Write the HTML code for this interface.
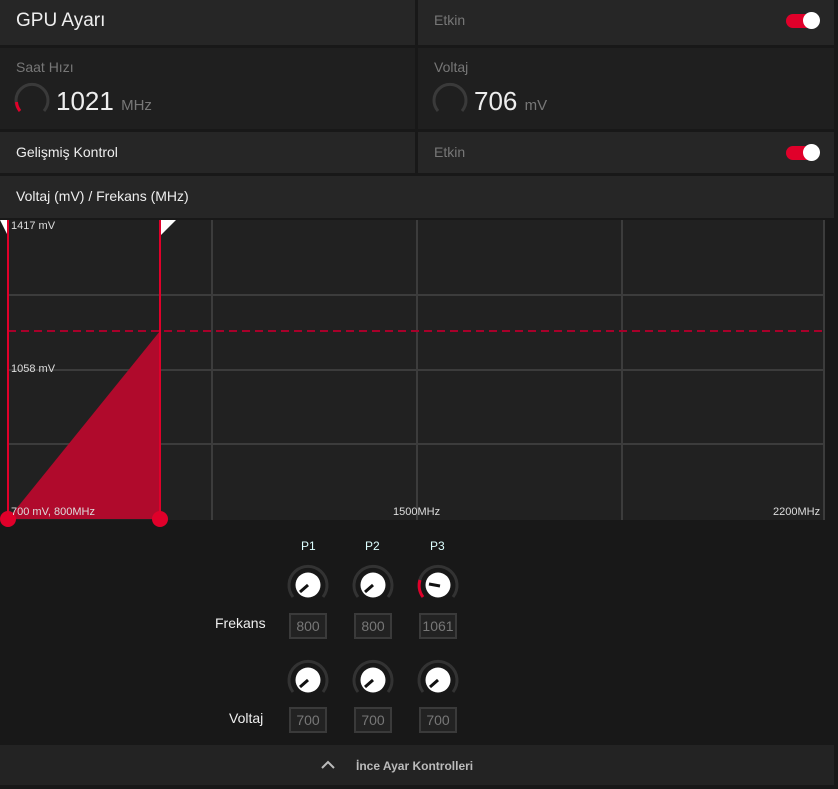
<!DOCTYPE html>
<html><head><meta charset="utf-8"><style>
*{margin:0;padding:0;box-sizing:border-box}
body{width:838px;height:789px;background:#181818;font-family:"Liberation Sans",sans-serif;position:relative;overflow:hidden;color:#eee}
.p{position:absolute;background:#262626}
.t{position:absolute;font-size:14px;color:#eee}
.g{color:#777}
.sw{position:absolute;width:32px;height:14px;background:#e0002a;border-radius:7px}
.sw:after{content:"";position:absolute;right:-2px;top:-2px;width:17px;height:17px;border-radius:50%;background:#fff}
.box{position:absolute;width:38px;height:26px;border:2px solid #3a3a3a;background:#222;color:#777;font-size:14px;text-align:center;line-height:22px}
.lbl{position:absolute;font-size:12px;color:#ddd}
</style></head><body>
<div class="p" style="left:0;top:0;width:415px;height:45px"></div>
<div class="p" style="left:418px;top:0;width:416px;height:45px"></div>
<div class="p" style="left:0;top:48px;width:415px;height:81px;background:#1f1f1f"></div>
<div class="p" style="left:418px;top:48px;width:416px;height:81px;background:#1f1f1f"></div>
<div class="p" style="left:0;top:132px;width:415px;height:41px"></div>
<div class="p" style="left:418px;top:132px;width:416px;height:41px"></div>
<div class="p" style="left:0;top:176px;width:834px;height:42px"></div>
<div class="t" style="left:16px;top:10px;font-size:19px">GPU Ayarı</div>
<div class="t g" style="left:434px;top:12px">Etkin</div>
<div class="sw" style="left:786px;top:14px"></div>
<div class="t g" style="left:16px;top:59px">Saat Hızı</div>
<div class="t g" style="left:434px;top:59px">Voltaj</div>
<svg style="position:absolute;left:13px;top:82px" width="38" height="34"><path d="M7 29 A16 16 0 1 1 31 29" fill="none" stroke="#3a3a3a" stroke-width="3"/><path d="M7 29 A16 16 0 0 1 3.5 20" fill="none" stroke="#e0002a" stroke-width="3"/></svg>
<svg style="position:absolute;left:431px;top:82px" width="38" height="34"><path d="M7 29 A16 16 0 1 1 31 29" fill="none" stroke="#3a3a3a" stroke-width="3"/></svg>
<div class="t" style="left:56px;top:86px;font-size:26px">1021 <span class="g" style="font-size:15px">MHz</span></div>
<div class="t" style="left:474px;top:86px;font-size:26px">706 <span class="g" style="font-size:15px">mV</span></div>
<div class="t" style="left:16px;top:144px">Gelişmiş Kontrol</div>
<div class="t g" style="left:434px;top:144px">Etkin</div>
<div class="sw" style="left:786px;top:146px"></div>
<div class="t" style="left:16px;top:188px">Voltaj (mV) / Frekans (MHz)</div>
<svg style="position:absolute;left:0;top:220px" width="838" height="310">
<rect x="0" y="0" width="825" height="300" fill="#212121"/>
<rect x="0" y="0" width="7" height="300" fill="#1a1a1a"/>
<g stroke="#3c3c3c" stroke-width="2"><line x1="212" y1="0" x2="212" y2="300"/><line x1="417" y1="0" x2="417" y2="300"/><line x1="622" y1="0" x2="622" y2="300"/><line x1="824" y1="0" x2="824" y2="300"/>
<line x1="8" y1="75" x2="825" y2="75"/><line x1="8" y1="150" x2="825" y2="150"/><line x1="8" y1="224" x2="825" y2="224"/></g>
<polygon points="8,299 160,111 160,299" fill="#b00a2c"/>
<line x1="8" y1="111" x2="825" y2="111" stroke="#a8002a" stroke-width="2" stroke-dasharray="8,5"/>
<line x1="8" y1="0" x2="8" y2="300" stroke="#e0002a" stroke-width="2"/>
<line x1="160" y1="0" x2="160" y2="300" stroke="#e0002a" stroke-width="2"/>
<polygon points="0,0 7,0 7,14" fill="#fff"/><polygon points="161,0 176,0 161,15" fill="#fff"/>
<circle cx="8" cy="299" r="8" fill="#e0002a"/><circle cx="160" cy="299" r="8" fill="#e0002a"/>
</svg>
<div class="lbl" style="left:11px;top:220px;font-size:11px">1417 mV</div>
<div class="lbl" style="left:11px;top:363px;font-size:11px">1058 mV</div>
<div class="lbl" style="left:11px;top:506px;font-size:11px">700 mV, 800MHz</div>
<div class="lbl" style="left:393px;top:506px;font-size:11px">1500MHz</div>
<div class="lbl" style="left:773px;top:506px;font-size:11px">2200MHz</div>
<div class="lbl" style="left:301px;top:539px;color:#dff">P1</div>
<div class="lbl" style="left:365px;top:539px;color:#dff">P2</div>
<div class="lbl" style="left:430px;top:539px;color:#dff">P3</div>
<svg style="position:absolute;left:280px;top:560px" width="190" height="150">
<defs><g id="k"><path d="M-15 12 A19 19 0 1 1 15 12" fill="none" stroke="#333" stroke-width="3"/><circle r="12.5" fill="#fff"/></g></defs>
<g transform="translate(28,25)"><use href="#k"/><line x1="0" y1="0" x2="-8" y2="7" stroke="#111" stroke-width="3"/></g>
<g transform="translate(93,25)"><use href="#k"/><line x1="0" y1="0" x2="-8" y2="7" stroke="#111" stroke-width="3"/></g>
<g transform="translate(158,25)"><use href="#k"/><path d="M-15 12 A19 19 0 0 1 -18 -5" fill="none" stroke="#e0002a" stroke-width="3"/><line x1="2" y1="1" x2="-9" y2="-1" stroke="#111" stroke-width="3"/></g>
<g transform="translate(28,120)"><use href="#k"/><line x1="0" y1="0" x2="-8" y2="7" stroke="#111" stroke-width="3"/></g>
<g transform="translate(93,120)"><use href="#k"/><line x1="0" y1="0" x2="-8" y2="7" stroke="#111" stroke-width="3"/></g>
<g transform="translate(158,120)"><use href="#k"/><line x1="0" y1="0" x2="-8" y2="7" stroke="#111" stroke-width="3"/></g>
</svg>
<div class="t" style="left:215px;top:615px">Frekans</div>
<div class="t" style="left:229px;top:710px">Voltaj</div>
<div class="box" style="left:289px;top:613px">800</div>
<div class="box" style="left:354px;top:613px">800</div>
<div class="box" style="left:419px;top:613px">1061</div>
<div class="box" style="left:289px;top:707px">700</div>
<div class="box" style="left:354px;top:707px">700</div>
<div class="box" style="left:419px;top:707px">700</div>
<div class="p" style="left:0;top:745px;width:834px;height:40px;background:#232323"></div>
<svg style="position:absolute;left:320px;top:760px" width="16" height="10"><path d="M2 8 L8 2 L14 8" fill="none" stroke="#bbb" stroke-width="2"/></svg>
<div class="t" style="left:356px;top:759px;font-size:12px;color:#bbb;font-weight:bold">İnce Ayar Kontrolleri</div>
</body></html>
